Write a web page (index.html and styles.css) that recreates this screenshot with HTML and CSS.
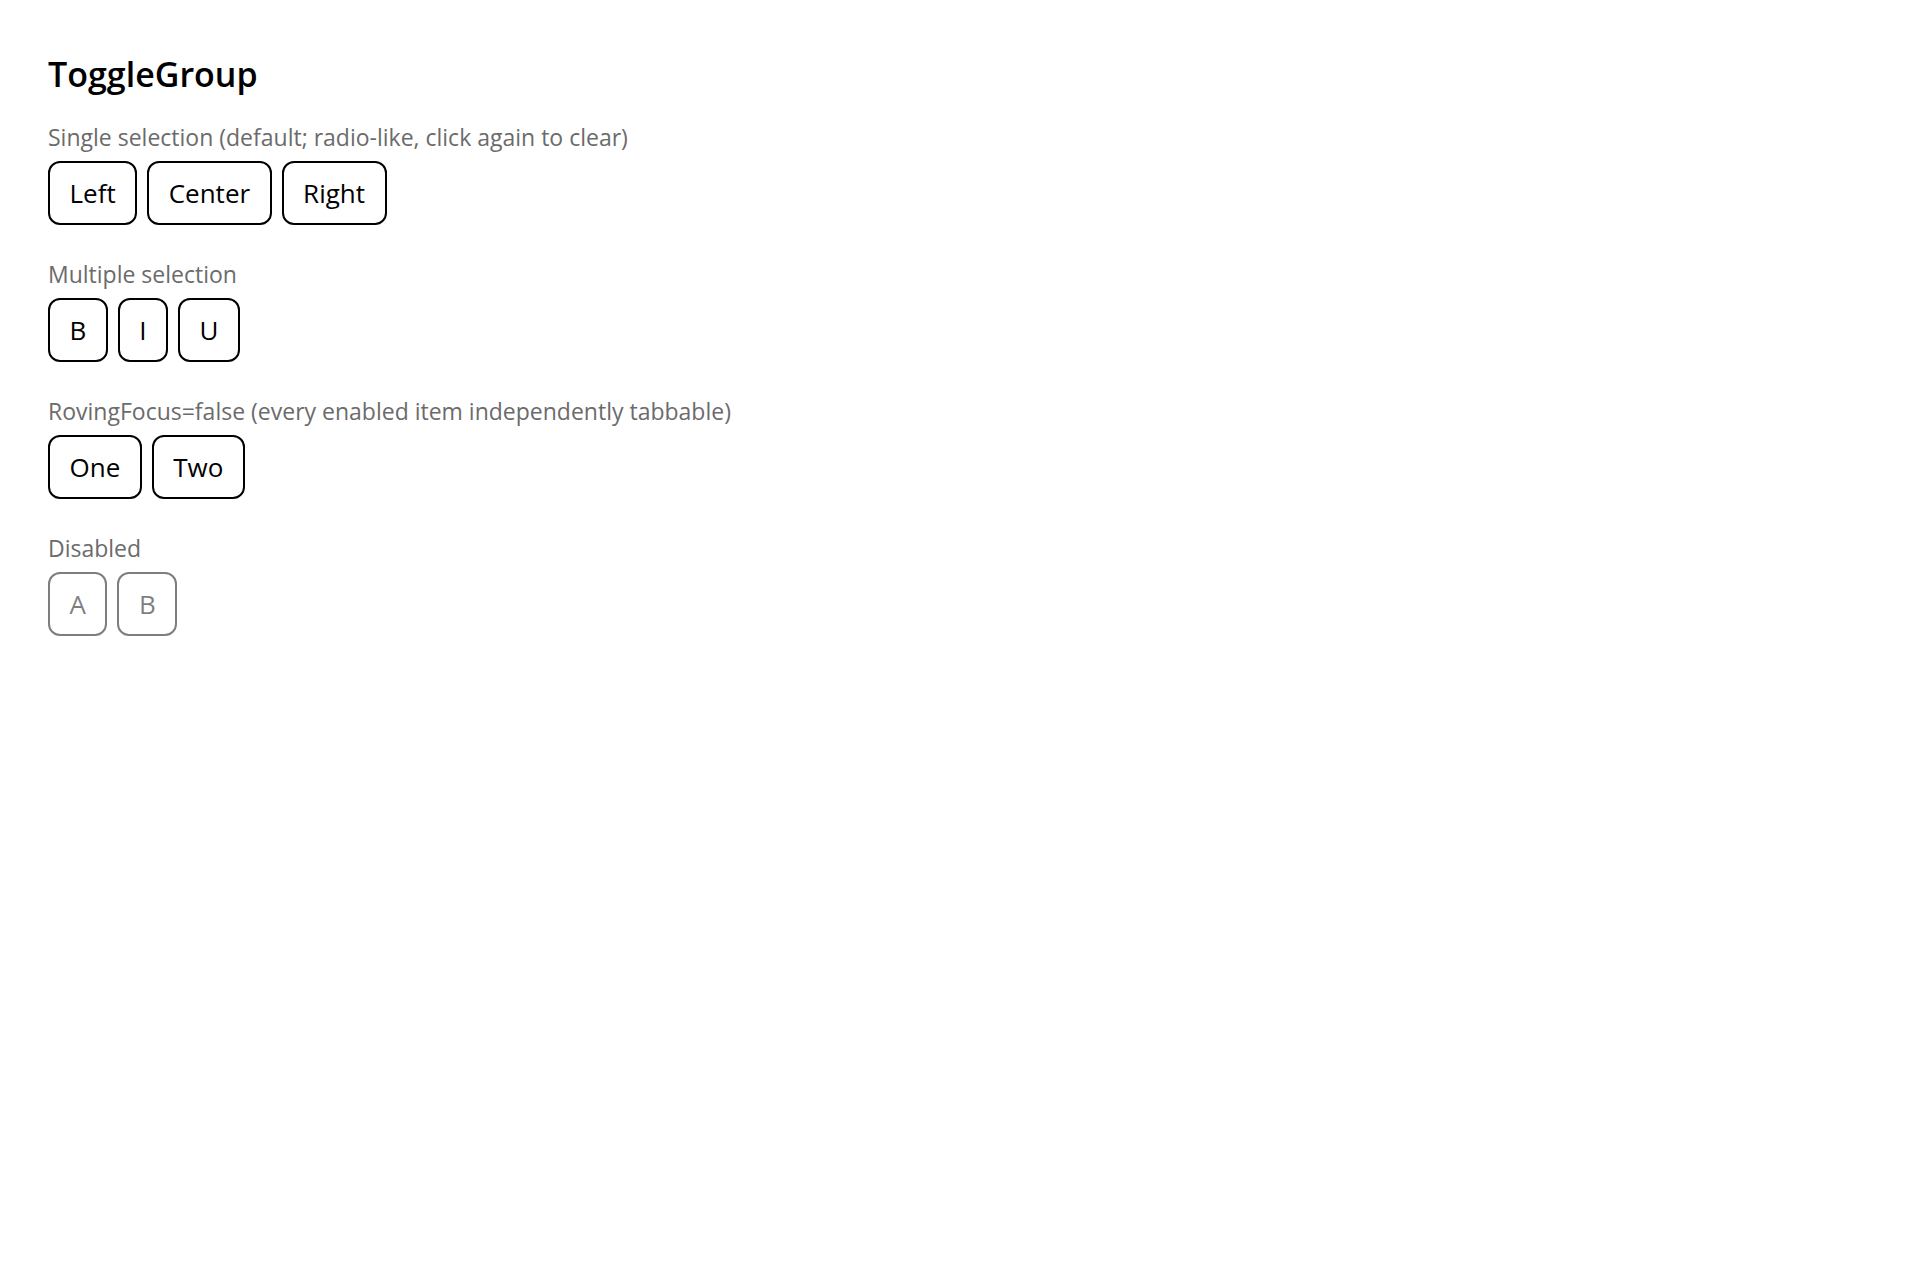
FILE: index.html
```html
<!DOCTYPE html>
<html>
<head>
  <meta charset="UTF-8">
  <meta name="viewport" content="width=device-width, initial-scale=1.0">
  <title>ToggleGroup</title>
  <link rel="stylesheet" href="styles.css">
</head>
<body>
<div class="page">
  <h1 class="title">ToggleGroup</h1>

  <section class="demo">
    <p class="demo-label">Single selection (default; radio-like, click again to clear)</p>
    <div class="toggle-group" role="group">
      <button class="toggle" type="button">Left</button>
      <button class="toggle" type="button">Center</button>
      <button class="toggle" type="button">Right</button>
    </div>
  </section>

  <section class="demo">
    <p class="demo-label">Multiple selection</p>
    <div class="toggle-group" role="group">
      <button class="toggle" type="button">B</button>
      <button class="toggle" type="button">I</button>
      <button class="toggle" type="button">U</button>
    </div>
  </section>

  <section class="demo">
    <p class="demo-label">RovingFocus=false (every enabled item independently tabbable)</p>
    <div class="toggle-group" role="group">
      <button class="toggle" type="button">One</button>
      <button class="toggle" type="button">Two</button>
    </div>
  </section>

  <section class="demo">
    <p class="demo-label">Disabled</p>
    <div class="toggle-group" role="group">
      <button class="toggle" type="button" disabled>A</button>
      <button class="toggle" type="button" disabled>B</button>
    </div>
  </section>
</div>
</body>
</html>
```
FILE: styles.css
```css
body {
  margin: 0;
  background: #fff;
  color: #000;
  font-family: "Open Sans", "Noto Sans", sans-serif;
}

.page {
  padding: 54px 48px;
}

.title {
  margin: 0 0 27px 0;
  font-size: 34px;
  font-weight: 600;
  line-height: 40px;
}

.demo {
  margin-bottom: 33px;
}

.demo-label {
  margin: 0 0 8px 0;
  font-size: 23px;
  line-height: 32px;
  color: #6b6b6b;
}

.toggle-group {
  display: flex;
  gap: 10px;
}

.toggle {
  box-sizing: border-box;
  height: 64px;
  padding: 0 19.5px;
  border: 2px solid #000;
  border-radius: 12px;
  background: #fff;
  color: #000;
  font-family: inherit;
  font-size: 26px;
  line-height: 1;
  cursor: pointer;
}

.toggle:disabled {
  opacity: 0.5;
  cursor: default;
}
```
